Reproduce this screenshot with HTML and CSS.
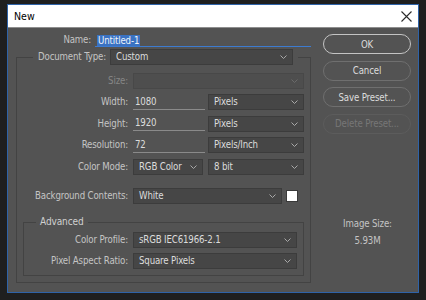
FILE: index.html
```html
<!DOCTYPE html>
<html>
<head>
<meta charset="utf-8">
<link rel="stylesheet" href="styles.css">
</head>
<body>
<div class="dialog">
  <div class="titlebar">
    <span class="title">New</span>
    <svg class="close" width="11" height="11" viewBox="0 0 11 11"><path d="M0.5 0.5 L10.5 10.5 M10.5 0.5 L0.5 10.5" stroke="#2b2b2b" stroke-width="1.1" fill="none"/></svg>
  </div>
  <div class="content">
    <div class="main">
      <div class="name-row">
        <span class="label name-label">Name:</span>
        <div class="name-input"><span class="sel">Untitled-1</span></div>
      </div>
      <div class="group">
        <div class="group-head doc-head">
          <span class="label head-label">Document Type:</span>
          <div class="dd dd-doc"><span>Custom</span><svg class="chev" width="7" height="4" viewBox="0 0 7 4"><path d="M0.5 0.5 L3.5 3.5 L6.5 0.5" stroke="#a9a9a9" fill="none"/></svg></div>
        </div>
        <div class="rows">
          <div class="row">
            <span class="label row-label disabled">Size:</span>
            <div class="dd dd-disabled dd-full"><span></span><svg class="chev" width="7" height="4" viewBox="0 0 7 4"><path d="M0.5 0.5 L3.5 3.5 L6.5 0.5" stroke="#6a6a6a" fill="none"/></svg></div>
          </div>
          <div class="row">
            <span class="label row-label">Width:</span>
            <div class="num">1080</div>
            <div class="dd dd-unit"><span>Pixels</span><svg class="chev" width="7" height="4" viewBox="0 0 7 4"><path d="M0.5 0.5 L3.5 3.5 L6.5 0.5" stroke="#a9a9a9" fill="none"/></svg></div>
          </div>
          <div class="row">
            <span class="label row-label">Height:</span>
            <div class="num">1920</div>
            <div class="dd dd-unit"><span>Pixels</span><svg class="chev" width="7" height="4" viewBox="0 0 7 4"><path d="M0.5 0.5 L3.5 3.5 L6.5 0.5" stroke="#a9a9a9" fill="none"/></svg></div>
          </div>
          <div class="row">
            <span class="label row-label">Resolution:</span>
            <div class="num">72</div>
            <div class="dd dd-unit"><span>Pixels/Inch</span><svg class="chev" width="7" height="4" viewBox="0 0 7 4"><path d="M0.5 0.5 L3.5 3.5 L6.5 0.5" stroke="#a9a9a9" fill="none"/></svg></div>
          </div>
          <div class="row">
            <span class="label row-label">Color Mode:</span>
            <div class="dd dd-mode"><span>RGB Color</span><svg class="chev" width="7" height="4" viewBox="0 0 7 4"><path d="M0.5 0.5 L3.5 3.5 L6.5 0.5" stroke="#a9a9a9" fill="none"/></svg></div>
            <div class="dd dd-unit"><span>8 bit</span><svg class="chev" width="7" height="4" viewBox="0 0 7 4"><path d="M0.5 0.5 L3.5 3.5 L6.5 0.5" stroke="#a9a9a9" fill="none"/></svg></div>
          </div>
          <div class="row row-bg">
            <span class="label row-label">Background Contents:</span>
            <div class="dd dd-bg"><span>White</span><svg class="chev" width="7" height="4" viewBox="0 0 7 4"><path d="M0.5 0.5 L3.5 3.5 L6.5 0.5" stroke="#a9a9a9" fill="none"/></svg></div>
            <div class="swatch"></div>
          </div>
        </div>
        <div class="adv">
          <div class="group-head adv-head"><span class="label adv-label">Advanced</span></div>
          <div class="adv-rows">
            <div class="row">
              <span class="label adv-row-label">Color Profile:</span>
              <div class="dd dd-adv"><span>sRGB IEC61966-2.1</span><svg class="chev" width="7" height="4" viewBox="0 0 7 4"><path d="M0.5 0.5 L3.5 3.5 L6.5 0.5" stroke="#a9a9a9" fill="none"/></svg></div>
            </div>
            <div class="row">
              <span class="label adv-row-label">Pixel Aspect Ratio:</span>
              <div class="dd dd-adv"><span>Square Pixels</span><svg class="chev" width="7" height="4" viewBox="0 0 7 4"><path d="M0.5 0.5 L3.5 3.5 L6.5 0.5" stroke="#a9a9a9" fill="none"/></svg></div>
            </div>
          </div>
        </div>
      </div>
    </div>
    <div class="side">
      <div class="btn btn-ok">OK</div>
      <div class="btn">Cancel</div>
      <div class="btn">Save Preset...</div>
      <div class="btn btn-disabled">Delete Preset...</div>
      <div class="imgsize">
        <div class="imgsize-label">Image Size:</div>
        <div class="imgsize-value">5.93M</div>
      </div>
    </div>
  </div>
</div>
</body>
</html>
```

FILE: styles.css
```css
* { box-sizing: border-box; }
html, body { margin: 0; padding: 0; }
body {
  background: #1f1f1f;
  width: 426px;
  height: 300px;
  overflow: hidden;
  font-family: "DejaVu Sans Condensed", "DejaVu Sans", sans-serif;
  font-stretch: condensed;
  font-size: 9.6px;
  letter-spacing: -0.15px;
  padding: 4px 0 0 7px;
}
.dialog {
  width: 412px;
  height: 289px;
  border: 1px solid #2f63a8;
  background: #535353;
  display: flex;
  flex-direction: column;
}
.titlebar {
  height: 23px;
  background: #ffffff;
  border-bottom: 1px solid #8e8e8e;
  display: flex;
  align-items: center;
  justify-content: space-between;
  padding: 0 6px 0 6px;
}
.title {
  font-size: 10.5px;
  letter-spacing: 0;
  color: #000;
}
.close { display: block; }
.content {
  display: flex;
  flex: 1;
}
.main {
  width: 304px;
  display: flex;
  flex-direction: column;
}
.label { color: #c4c4c4; white-space: nowrap; line-height: 12px; }
.disabled { color: #868686; }
.name-row {
  display: flex;
  align-items: flex-end;
  margin-top: 5px;
  height: 14px;
}
.name-label { width: 83px; text-align: right; padding-bottom: 1px; }
.name-input {
  margin-left: 4px;
  width: 216px;
  height: 14px;
  border-bottom: 1px solid #3d7bd0;
  padding-left: 2px;
  display: flex;
  align-items: flex-end;
}
.sel {
  background: #3a72c2;
  color: #eef3fa;
  line-height: 11px;
  height: 11px;
  padding: 0 1px;
}
.group {
  margin: 10px 0 0 8px;
  width: 295px;
  height: 226px;
  border: 1px solid #434343;
  display: flex;
  flex-direction: column;
}
.group-head {
  display: flex;
  align-items: center;
  background: #535353;
}
.doc-head {
  margin: -9px 0 0 16px;
  width: 265px;
  height: 16px;
  padding: 0 5px;
  gap: 4px;
}
.head-label { flex: 1; text-align: right; }
.dd {
  height: 16px;
  background: #464646;
  border: 1px solid #3c3c3c;
  display: flex;
  align-items: center;
  justify-content: space-between;
  padding: 0 5px 0 5px;
  color: #dcdcdc;
  white-space: nowrap;
}
.dd span { line-height: 12px; }
.chev { display: block; flex: none; }
.dd-doc { width: 183px; padding-left: 5px; }
.rows {
  display: flex;
  flex-direction: column;
  gap: 5.4px;
  margin-top: 8px;
}
.row {
  display: flex;
  align-items: center;
  height: 16px;
}
.row-label { width: 111px; text-align: right; margin-right: 5px; }
.dd-disabled { background: #4e4e4e; border-color: #484848; }
.dd-full { width: 171px; }
.num {
  width: 72px;
  height: 15px;
  border-bottom: 1px solid #8a8a8a;
  color: #dcdcdc;
  padding-left: 2px;
  line-height: 14px;
  margin-right: 3px;
}
.dd-unit { width: 96px; }
.dd-mode { width: 70px; margin-right: 5px; }
.row-bg { margin-top: 8px; }
.dd-bg { width: 149px; margin-right: 4px; }
.swatch {
  width: 12px;
  height: 12px;
  background: #ffffff;
  border: 1px solid #3a3a3a;
}
.adv {
  margin: 18px 0 0 6px;
  width: 281px;
  height: 54px;
  border: 1px solid #434343;
  display: flex;
  flex-direction: column;
}
.adv-head {
  margin: -8px 0 0 12px;
  height: 14px;
  padding: 0 4px;
  align-self: flex-start;
}
.adv-label { color: #d0d0d0; font-size: 10px; letter-spacing: -0.1px; }
.adv-rows {
  display: flex;
  flex-direction: column;
  gap: 5px;
  margin-top: 3px;
}
.adv-row-label { width: 104px; text-align: right; margin-right: 5px; }
.dd-adv { width: 164px; }
.side {
  margin-left: 11px;
  width: 88px;
  display: flex;
  flex-direction: column;
  padding-top: 6px;
  gap: 6.5px;
}
.btn {
  height: 20px;
  border: 1px solid #6f6f6f;
  border-radius: 10px;
  display: flex;
  align-items: center;
  justify-content: center;
  color: #dcdcdc;
}
.btn-ok { border-color: #c4c4c4; }
.btn-disabled { border-color: #5c5c5c; color: #777777; }
.imgsize {
  margin-top: 78px;
  text-align: center;
  color: #c4c4c4;
  padding-left: 1px;
}
.imgsize-label { line-height: 12px; }
.imgsize-value { line-height: 12px; margin-top: 5px; }
```
